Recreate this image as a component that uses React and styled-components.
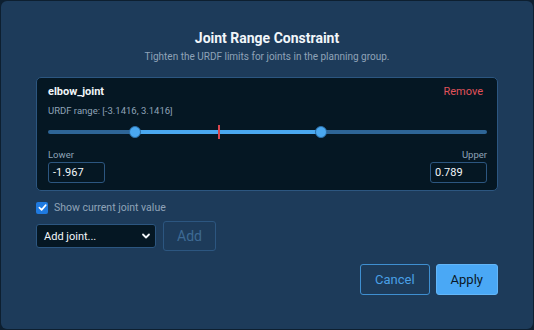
import React from "react";
import styled, { createGlobalStyle } from "styled-components";

const Global = createGlobalStyle`
  html, body { margin: 0; padding: 0; background: #0d1f30; }
  body { font-family: Roboto, "Liberation Sans", sans-serif; }
  * { box-sizing: border-box; }
`;

const Dialog = styled.div`
  width: 532px;
  height: 328px;
  margin: 1px;
  background: #1d3b5a;
  border-radius: 6px;
  padding: 28px 35px 0 35px;
  display: flex;
  flex-direction: column;
  color: #e8eef4;
`;

const Title = styled.h2`
  margin: 0;
  text-align: center;
  font-size: 14px;
  font-weight: 700;
  color: #f2f6fa;
  line-height: 18px;
`;

const Subtitle = styled.p`
  margin: 3px 0 0;
  text-align: center;
  font-size: 10px;
  color: #8fa3b8;
  line-height: 14px;
`;

const Card = styled.div`
  margin-top: 13px;
  background: #051723;
  border: 1px solid #2c5680;
  border-radius: 5px;
  padding: 7px 10px 7px 11px;
  display: flex;
  flex-direction: column;
`;

const CardHeader = styled.div`
  display: flex;
  justify-content: space-between;
  align-items: center;
`;

const JointName = styled.span`
  font-size: 11px;
  font-weight: 700;
  color: #f2f6fa;
`;

const RemoveLink = styled.span`
  font-size: 11px;
  color: #e0525a;
  margin-right: 4px;
`;

const Range = styled.div`
  margin-top: 7px;
  font-size: 9.5px;
  color: #8fa3b8;
`;

const Slider = styled.div`
  position: relative;
  height: 16px;
  margin-top: 8px;
`;

const Track = styled.div`
  position: absolute;
  left: 0;
  right: 0;
  top: 6px;
  height: 4px;
  border-radius: 2px;
  background: #2e6596;
`;

const Fill = styled.div`
  position: absolute;
  top: 6px;
  height: 4px;
  background: #4aa8f0;
`;

const Thumb = styled.div`
  position: absolute;
  top: 2px;
  width: 12px;
  height: 12px;
  margin-left: -6px;
  border-radius: 50%;
  background: #4aa8f0;
  border: 1px solid #2c6fa8;
`;

const Marker = styled.div`
  position: absolute;
  top: 1px;
  width: 2px;
  height: 14px;
  margin-left: -1px;
  background: #d9464e;
`;

const Bounds = styled.div`
  display: flex;
  justify-content: space-between;
  align-items: flex-end;
  margin-top: 9px;
`;

const Field = styled.div`
  display: flex;
  flex-direction: column;
  align-items: ${(p) => (p.$right ? "flex-end" : "flex-start")};
`;

const FieldLabel = styled.span`
  font-size: 9.5px;
  color: #8fa3b8;
  margin-bottom: 2px;
`;

const NumInput = styled.div`
  width: 57px;
  height: 21px;
  border: 1px solid #2c5680;
  border-radius: 3px;
  background: #051723;
  font-size: 11px;
  color: #f2f6fa;
  padding: 0 4px;
  display: flex;
  align-items: center;
`;

const CheckRow = styled.label`
  display: flex;
  align-items: center;
  gap: 6px;
  margin-top: 10px;
  font-size: 10.5px;
  color: #8fa3b8;
`;

const Box = styled.span`
  width: 12px;
  height: 12px;
  border-radius: 2px;
  background: #1f7ae0;
  display: flex;
  align-items: center;
  justify-content: center;
`;

const AddRow = styled.div`
  display: flex;
  align-items: center;
  gap: 7px;
  margin-top: 7px;
`;

const Select = styled.div`
  width: 120px;
  height: 24px;
  background: #051723;
  border: 1px solid #2c5680;
  border-radius: 3px;
  display: flex;
  align-items: center;
  justify-content: space-between;
  padding: 0 4px 0 7px;
  font-size: 11px;
  color: #f2f6fa;
`;

const GhostButton = styled.button`
  height: ${(p) => p.$h || 31}px;
  padding: 0 ${(p) => p.$px || 14}px;
  background: transparent;
  border: 1px solid ${(p) => (p.$disabled ? "#2c5680" : "#3f8fd0")};
  border-radius: 3px;
  color: ${(p) => (p.$disabled ? "#3d6a94" : "#4aa0e6")};
  font-family: inherit;
  font-size: ${(p) => p.$fs || 13}px;
`;

const PrimaryButton = styled.button`
  height: 31px;
  padding: 0 14px;
  background: #4aa8f5;
  border: 1px solid #63b6f8;
  border-radius: 3px;
  color: #0a1826;
  font-family: inherit;
  font-size: 13px;
`;

const Footer = styled.div`
  display: flex;
  justify-content: flex-end;
  gap: 6px;
  margin-top: 13px;
`;

export default function App() {
  const lower = 19.8;
  const upper = 62.1;
  const current = 39;
  return (
    <>
      <Global />
      <Dialog>
        <Title>Joint Range Constraint</Title>
        <Subtitle>Tighten the URDF limits for joints in the planning group.</Subtitle>
        <Card>
          <CardHeader>
            <JointName>elbow_joint</JointName>
            <RemoveLink>Remove</RemoveLink>
          </CardHeader>
          <Range>URDF range: [-3.1416, 3.1416]</Range>
          <Slider>
            <Track />
            <Fill style={{ left: `${lower}%`, width: `${upper - lower}%` }} />
            <Marker style={{ left: `${current}%` }} />
            <Thumb style={{ left: `${lower}%` }} />
            <Thumb style={{ left: `${upper}%` }} />
          </Slider>
          <Bounds>
            <Field>
              <FieldLabel>Lower</FieldLabel>
              <NumInput>-1.967</NumInput>
            </Field>
            <Field $right>
              <FieldLabel>Upper</FieldLabel>
              <NumInput>0.789</NumInput>
            </Field>
          </Bounds>
        </Card>
        <CheckRow>
          <Box>
            <svg width="9" height="9" viewBox="0 0 10 10">
              <path d="M1.5 5.2 L4 7.6 L8.6 2.4" fill="none" stroke="#fff" strokeWidth="1.8" strokeLinecap="round" strokeLinejoin="round" />
            </svg>
          </Box>
          Show current joint value
        </CheckRow>
        <AddRow>
          <Select>
            <span>Add joint...</span>
            <svg width="10" height="10" viewBox="0 0 10 10">
              <path d="M2 3.5 L5 6.5 L8 3.5" fill="none" stroke="#f2f6fa" strokeWidth="1.8" strokeLinecap="round" strokeLinejoin="round" />
            </svg>
          </Select>
          <GhostButton $disabled $h={30} $px={13} $fs={14}>Add</GhostButton>
        </AddRow>
        <Footer>
          <GhostButton>Cancel</GhostButton>
          <PrimaryButton>Apply</PrimaryButton>
        </Footer>
      </Dialog>
    </>
  );
}
